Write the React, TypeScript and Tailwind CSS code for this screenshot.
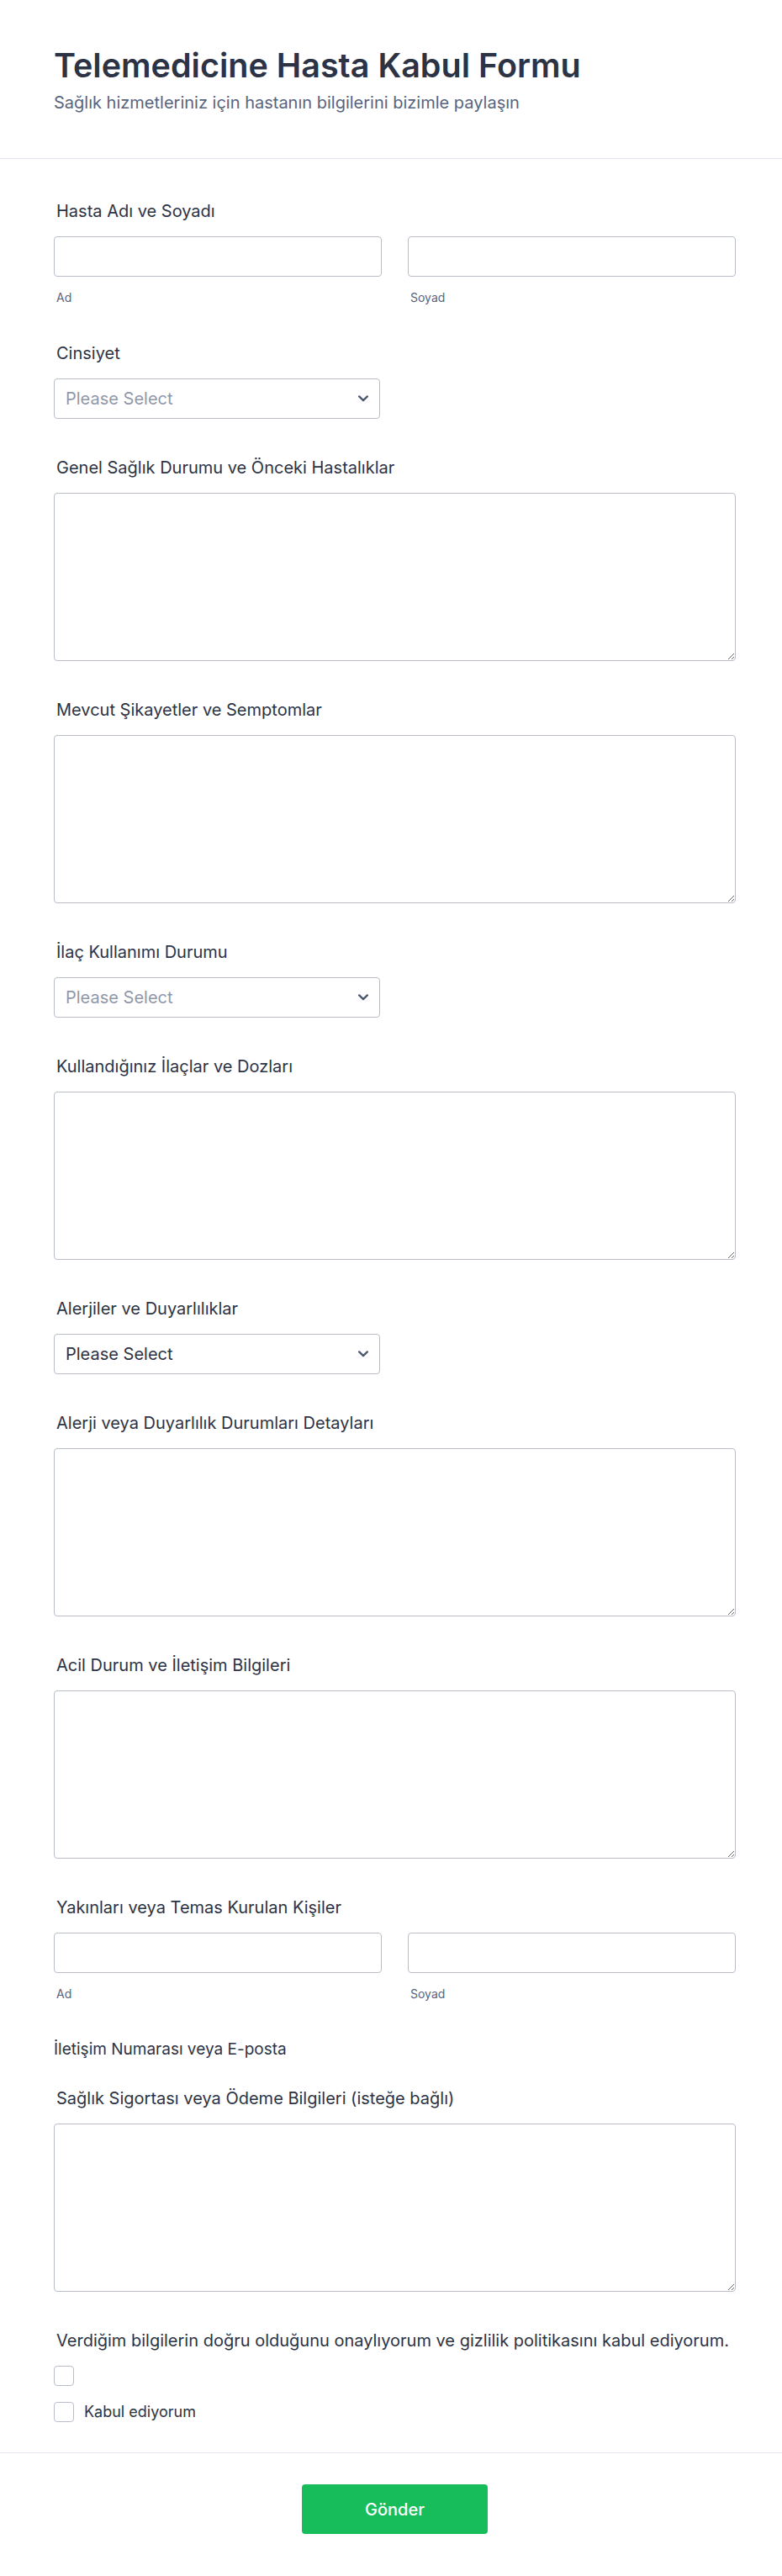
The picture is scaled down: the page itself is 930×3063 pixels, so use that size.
import React from "react";

const labelCls = "pl-[3px] text-[20px] leading-[24px] font-normal whitespace-nowrap text-[#2c3345]";
const subCls = "mt-[16px] pl-[3px] text-[14px] leading-[18px] text-[#57647e]";
const boxCls = "block w-full h-[48px] rounded-[4px] border border-[#b8bdc9] bg-white";

function Label({ children }: { children: React.ReactNode }) {
  return <div className={labelCls}>{children}</div>;
}

function NameField({ label, mt }: { label: string; mt: string }) {
  return (
    <div className={mt}>
      <Label>{label}</Label>
      <div className="mt-[18px] grid grid-cols-2 gap-x-[31px]">
        <div>
          <input type="text" className={boxCls} />
          <div className={subCls}>Ad</div>
        </div>
        <div>
          <input type="text" className={boxCls} />
          <div className={subCls}>Soyad</div>
        </div>
      </div>
    </div>
  );
}

function Chevron() {
  return (
    <svg width="12" height="8" viewBox="0 0 12 8" fill="none">
      <polyline
        points="1.2,1.4 6,6.2 10.8,1.4"
        stroke="#4f5a73"
        strokeWidth="2.4"
        strokeLinecap="round"
        strokeLinejoin="round"
      />
    </svg>
  );
}

function SelectField({ label, filled, mt = "mt-[46px]" }: { label: string; filled?: boolean; mt?: string }) {
  return (
    <div className={mt}>
      <Label>{label}</Label>
      <div className="mt-[18px] flex h-[48px] w-[388px] items-center justify-between rounded-[4px] border border-[#b8bdc9] bg-white pl-[13px] pr-[13px]">
        <span
          className={
            filled
              ? "text-[20px] leading-[24px] text-[#2c3345]"
              : "text-[20px] leading-[24px] text-[#8f98ab]"
          }
        >
          Please Select
        </span>
        <Chevron />
      </div>
    </div>
  );
}

function TextAreaField({ label, mt = "mt-[46px]" }: { label: string; mt?: string }) {
  return (
    <div className={mt}>
      <Label>{label}</Label>
      <textarea className="mt-[18px] block h-[200px] w-full rounded-[4px] border border-[#b8bdc9] bg-white" />
    </div>
  );
}

function Checkbox() {
  return <div className="h-[24px] w-[24px] shrink-0 rounded-[4px] border border-[#b8bdc9] bg-white" />;
}

export default function App() {
  return (
    <div className="min-h-[3063px] w-full bg-white font-[family-name:Inter,_sans-serif] text-[#2c3345]">
      <header className="border-b border-[#e1e4eb] pl-[64px] pr-[55px] pt-[54px] pb-[54px]">
        <h1 className="text-[39.5px] leading-[48px] font-semibold text-[#2c3345]">
          Telemedicine Hasta Kabul Formu
        </h1>
        <p className="mt-[8px] text-[20px] leading-[24px] text-[#57647e]">
          Sağlık hizmetleriniz için hastanın bilgilerini bizimle paylaşın
        </p>
      </header>

      <main className="border-b border-[#e6e9f1] pl-[64px] pr-[55px] pt-[50px] pb-[36px]">
        <NameField label="Hasta Adı ve Soyadı" mt="" />
        <SelectField label="Cinsiyet" mt="mt-[45px]" />
        <TextAreaField label="Genel Sağlık Durumu ve Önceki Hastalıklar" />
        <TextAreaField label="Mevcut Şikayetler ve Semptomlar" />
        <SelectField label="İlaç Kullanımı Durumu" />
        <TextAreaField label="Kullandığınız İlaçlar ve Dozları" />
        <SelectField label="Alerjiler ve Duyarlılıklar" filled />
        <TextAreaField label="Alerji veya Duyarlılık Durumları Detayları" />
        <TextAreaField label="Acil Durum ve İletişim Bilgileri" />
        <NameField label="Yakınları veya Temas Kurulan Kişiler" mt="mt-[46px]" />
        <div className="mt-[45px] text-[19px] leading-[24px] text-[#2c3345]">
          İletişim Numarası veya E-posta
        </div>
        <TextAreaField label="Sağlık Sigortası veya Ödeme Bilgileri (isteğe bağlı)" mt="mt-[34px]" />
        <div className="mt-[46px]">
          <Label>Verdiğim bilgilerin doğru olduğunu onaylıyorum ve gizlilik politikasını kabul ediyorum.</Label>
          <div className="mt-[18px] flex flex-col gap-[19px]">
            <div className="flex h-[24px] items-center">
              <Checkbox />
            </div>
            <div className="flex h-[24px] items-center gap-[12px]">
              <Checkbox />
              <span className="text-[18px] leading-[24px] text-[#2c3345]">Kabul ediyorum</span>
            </div>
          </div>
        </div>
      </main>

      <footer className="flex justify-center pl-[64px] pr-[55px] pt-[37px] pb-[50px]">
        <button className="h-[59px] w-[221px] rounded-[4px] bg-[#18bd5b] text-[20px] font-medium text-white">
          Gönder
        </button>
      </footer>
    </div>
  );
}
